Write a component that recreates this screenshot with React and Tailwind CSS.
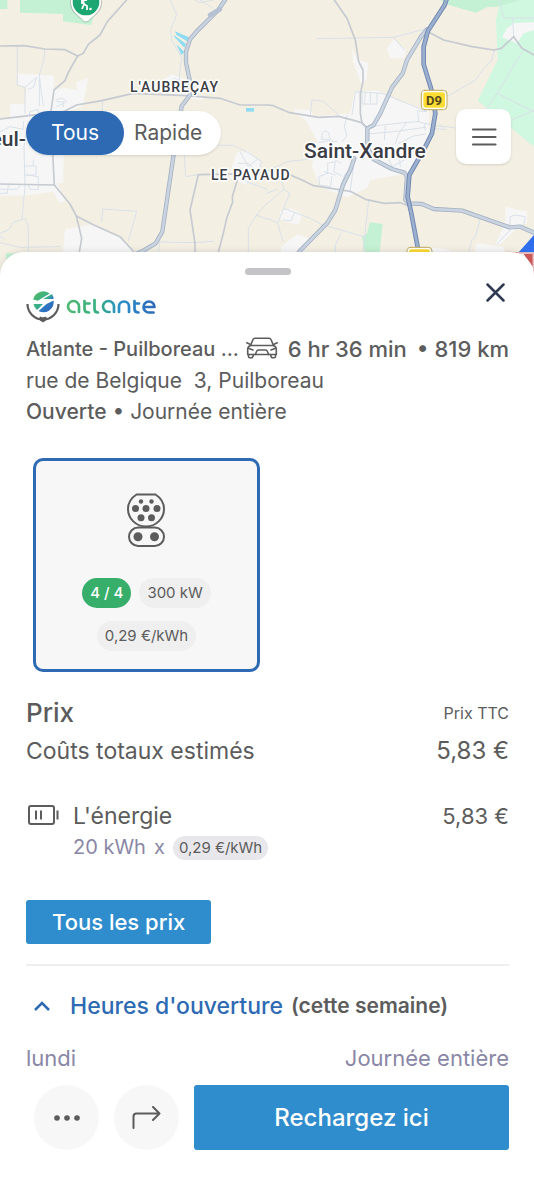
import React from "react";

const MAP_LABEL = {
  fontFamily: "Roboto, sans-serif",
  fontWeight: 500,
  fill: "#3a3d45",
  stroke: "#ffffff",
  strokeWidth: 3,
  strokeLinejoin: "round",
  paintOrder: "stroke",
};

function Road({ d }) {
  return (
    <>
      <path d={d} stroke="#a5b2c4" strokeWidth="13" />
      <path d={d} stroke="#c9d4e0" strokeWidth="8" />
    </>
  );
}

function MainRoad({ d }) {
  return (
    <>
      <path d={d} stroke="#7288b2" strokeWidth="14" />
      <path d={d} stroke="#9bb0cf" strokeWidth="8" />
    </>
  );
}

function MapView() {
  return (
    <svg
      className="col-start-1 row-start-1 block h-[280px] w-full"
      viewBox="0 0 534 280"
      preserveAspectRatio="xMidYMid slice"
      role="img"
      aria-label="Carte"
    >
      <rect width="534" height="280" fill="#f4efe3" />
      <g transform="scale(.33333)" fill="none" strokeLinejoin="round" strokeLinecap="round">
        <g fill="#c4f1d4">
          <path d="M0 0H22V27H0Z" />
          <path d="M60 0H298L272 75L189 64V42L60 38Z" />
          <path d="M18 760H50V800H18Z" />
        </g>
        <g fill="#f6f6f6">
          <path d="M52 220L162 227V268L200 264L232 270L228 246L265 235L248 320L192 336L190 510V548L172 550L196 604L178 608L160 575L70 587H0V360L30 355V312H75L80 262L52 256Z" />
          <path d="M195 688L280 672L360 710L405 757L400 840H180Z" />
          <path d="M480 246L515 222L548 235L560 285L500 280Z" />
          <path d="M560 285L620 288L605 300L575 296Z" />
          <path d="M695 500L712 455L745 452L785 490L772 525L740 555L690 535Z" />
        </g>
        <g fill="#8fdcf2">
          <path d="M525 94L567 112L561 124L530 105Z" />
          <path d="M521 105L558 131L553 143L524 112Z" />
          <path d="M529 132L553 156L544 165Z" />
          <path d="M738 324H762V335H738Z" />
        </g>
        <g stroke="#d9e1e9" strokeWidth="3">
          <path d="M52 140V255M135 148L132 180L118 225L122 262L130 318" />
          <path d="M52 255L75 262L110 232L100 262L85 268M75 262V340M118 235V318" />
          <path d="M168 300L185 294L200 305L170 320M170 305H190V320M90 335L115 328V345H90Z" />
          <path d="M0 395L30 380L70 388V365M85 365L72 440L75 560L66 655" />
          <path d="M75 498H108V525H75M82 525L115 530V568H90L85 555M100 480V498M0 568H50L62 555M0 580H22L25 555" />
          <path d="M0 700L25 690L40 668L75 655L85 680V757M0 728L60 742L180 740" />
          <path d="M0 710L12 716" />
          <path d="M305 665L308 627L410 634L385 722" />
          <path d="M307 302V340" />
          <path d="M510 0L530 44L512 88L515 120L545 172L538 225L540 262M505 250L525 235L545 245M515 262L530 240" />
          <path d="M600 0L640 25M585 0L600 8L640 0" />
          <path d="M553 466L557 530L595 524M655 436H700L745 458L785 485L775 515L742 550M720 455L745 500L770 480M715 490H745L765 512" />
          <path d="M801 610L770 645L745 685V757M475 757L480 726L585 728L640 724M770 645L801 658M740 545L801 568" />
        </g>
        <g stroke="#c6cad1" strokeWidth="5">
          <path d="M380 0L322 65L300 105L265 133L250 160L233 168L205 217L195 242L162 270L152 340L163 555" />
          <path d="M0 138L72 137L135 147L195 149L233 168" />
          <path d="M0 357L35 353L190 335L230 315L305 302L400 280L560 287L660 295L720 315H801" />
          <path d="M0 552L163 555L210 612L229 648L280 674L360 710L410 765" />
          <path d="M229 648L245 715L238 757" />
          <path d="M700 522L595 524L570 630L585 730V757M712 540L697 590L698 606L680 655L670 700L655 757" />
        </g>
        <Road d="M675 0L655 30L590 94L570 118L558 155V188L570 245V285L545 318L520 470L487 695L467 730L430 752L400 765" />
        <path d="M630 45L660 28" stroke="#b4c1d2" strokeWidth="14" />
      </g>

      <g transform="translate(267 0) scale(.33333)" fill="none" strokeLinejoin="round" strokeLinecap="round">
        <path d="M700 0H801V440L632 302L692 180L687 60Z" fill="#d0f7e0" />
        <path d="M520 0H760L690 20L660 22L627 38L545 15Z" fill="#c4f1d4" />
        <path d="M308 667L347 672L338 757L330 790H300L285 712L300 700Z" fill="#c4f1d4" />
        <g fill="#f6f6f6">
          <path d="M358 147L380 118L418 150L412 175H372Z" />
          <path d="M255 145L272 180L305 188L298 240L282 250L258 185Z" />
          <path d="M262 278L330 270L400 305L485 330L488 400L425 520L310 540L300 565L240 592L160 562L135 500L150 420L115 360L82 340V328L130 330L140 350L250 340Z" />
          <path d="M740 70L801 66V90L770 100L750 130L705 112L720 85Z" />
          <path d="M715 620L780 635V670L740 682L715 668Z" />
          <path d="M38 635L70 625L105 642L95 675L40 660Z" />
          <path d="M42 740L92 703L140 720L100 765H42ZM630 730L710 740V765H620ZM495 742L550 750V765H495ZM715 668L745 690L700 732H685Z" />
        </g>
        <g stroke="#d9e1e9" strokeWidth="3">
          <path d="M150 116L380 112L478 86M380 112L412 150M697 0L710 54H801M737 54L740 110M540 290L625 240L655 200L675 180L682 150" />
          <path d="M660 325L690 280L801 335M690 280L768 152M735 360L801 330" />
          <path d="M240 345L232 380L240 408L225 425M255 345L265 275L345 280L400 302L480 335L452 332L455 365L472 370L475 390M285 275V312H330V280M310 278V308M295 278L292 310" />
          <path d="M130 345L135 300L170 304L215 345M165 418V400L175 392L185 398L190 418H165M155 428L185 422L210 425" />
          <path d="M322 378L410 368L455 365M300 402L380 395L475 382M355 378L352 420M418 368L395 402L385 430M475 370L520 380H540L565 384M490 386L535 388M515 372L530 382M395 430L440 408L475 402M410 440L440 455M395 450L400 500M355 450L375 500L440 465" />
          <path d="M205 480L222 490M182 520V490L205 485L200 515L225 528M182 520L155 530L158 555L190 560L195 530M172 515L205 525M215 575L235 520M250 570L262 480" />
          <path d="M0 515L60 485L120 478M0 612L50 568L68 580L50 625L32 670L48 725M0 580L30 568M45 545L50 568M0 655L30 668M50 625L130 655L160 672L290 710M305 600L288 757M222 700L205 735V757" />
          <path d="M48 660L72 662L82 640M640 655L625 712L615 718L605 757M728 675L730 650L745 645L775 650L770 675M690 732L730 690" />
        </g>
        <g stroke="#c6cad1" strokeWidth="5">
          <path d="M202 0L240 55L265 120L275 185L288 210V245L280 280V340L285 370L300 384" />
          <path d="M0 315L15 316L68 338L155 352L215 349L285 368L300 384" />
          <path d="M483 95L530 120L615 140L680 150L703 145L740 110L765 145L801 165" />
          <path d="M70 525L105 540L140 557L250 574L295 598L352 610L400 608L425 618" />
        </g>
        <Road d="M480 88L462 110L420 180L407 220L375 262L340 340L320 375L301 385V440L320 478L375 507L412 518L420 530L415 600L425 610L465 612L500 627L585 632L728 682L760 680L801 698" />
        <Road d="M262 475L250 510L228 555L205 630L180 670L95 757" />
        <MainRoad d="M538 0L533 15L483 92L470 140V193L495 275L505 340L495 400L470 450L427 525L422 590L432 635L455 757" />
        <path d="M801 705V757H755Z" fill="#2f6fed" />
        <path d="M718 757L801 760V840" fill="#ffffff" stroke="#e9a9a9" strokeWidth="4" />
        <path d="M770 762H797V800Z" fill="#cf5a5a" />
        <g stroke="#bda95c" strokeWidth="3">
          <rect x="463" y="271" width="77" height="58" rx="11" fill="#fff" />
          <rect x="420" y="742" width="75" height="58" rx="11" fill="#fff" />
        </g>
        <rect x="469" y="277" width="65" height="46" rx="7" fill="#fddc33" />
        <rect x="426" y="748" width="63" height="46" rx="7" fill="#fddc33" />
      </g>

      <g style={MAP_LABEL}>
        <text x="130" y="92" fontSize="14" letterSpacing="1">L'AUBREÇAY</text>
        <text x="211" y="180" fontSize="14" letterSpacing="1">LE PAYAUD</text>
        <text x="304" y="158" fontSize="21">Saint-Xandre</text>
        <text x="26" y="146" fontSize="21" textAnchor="end">eul-</text>
      </g>
      <text x="434" y="105" fontSize="13" fontWeight="700" fill="#554a1d" textAnchor="middle" fontFamily="Roboto, sans-serif">D9</text>

      <g>
        <path d="M70 3C70-6 77-12 86-12S102-6 102 3C102 12 94 16 90 20Q86 25 82 20C78 16 70 12 70 3Z" fill="#8b8f93" opacity=".5" />
        <path d="M71 2C71-6 78-12 86-12S101-6 101 2C101 11 94 15 90 19Q86 24 82 19C78 15 71 11 71 2Z" fill="#fff" />
        <circle cx="86" cy="2" r="13.300" fill="#1ba672" />
        <path d="M82 0V4M82 9L84 4L83 0H87M84 4L87 6V10" fill="none" stroke="#fff" strokeWidth="1.800" />
        <circle cx="90.500" cy="9" r="1.300" fill="#fff" />
      </g>
    </svg>
  );
}

function AtlanteLogo() {
  return (
    <svg width="130" height="32" viewBox="0 0 130 32" role="img" aria-label="atlante">
      <defs>
        <linearGradient id="word" x1="40" x2="130" y1="0" y2="0" gradientUnits="userSpaceOnUse">
          <stop offset="0" stopColor="#52b971" />
          <stop offset=".35" stopColor="#35af80" />
          <stop offset=".6" stopColor="#2a8fc9" />
          <stop offset="1" stopColor="#2d69b8" />
        </linearGradient>
        <linearGradient id="globe" x1="9" x2="25" y1="3" y2="20" gradientUnits="userSpaceOnUse">
          <stop offset="0" stopColor="#52b96b" />
          <stop offset=".5" stopColor="#36ad8b" />
          <stop offset=".65" stopColor="#2d78c4" />
          <stop offset="1" stopColor="#2d69b8" />
        </linearGradient>
      </defs>
      <g fill="url(#globe)">
        <path d="M7.200 8.500A10.300 10.300 0 0 1 23.700 2.500L11.800 9.800Z" />
        <path d="M17 8L26 3Q27.500 5.500 27.500 8Z" />
        <path d="M7.500 13H17L11 19Q8 16.500 7.500 13Z" />
        <path d="M12.500 20L20.500 13L27.600 9.500A10.300 10.300 0 0 1 12.500 20Z" />
      </g>
      <path d="M1.500 13A15.500 15.500 0 0 0 32.500 13" fill="none" stroke="#5c5c5c" strokeWidth="2.200" />
      <path d="M14 26L17 27L20 26V29L17 31L14 29Z" fill="#5c5c5c" stroke="#5c5c5c" />
      <g transform="translate(0 1)" fill="none" stroke="url(#word)" strokeWidth="2.700" strokeLinecap="round" strokeLinejoin="round">
        <path d="M53 20V14.500A5.500 5.500 0 1 0 47.500 20H48.500" />
        <path d="M58.500 9V17Q58.500 20.500 63 20.500M58.500 11.500H63.500" />
        <path d="M68.500 8V17Q68.500 20.500 72 20.500" />
        <path d="M88 20V14.500A5.500 5.500 0 1 0 82.500 20H83.500" />
        <path d="M93 20V14.500A5 5 0 0 1 103 14.500V20" />
        <path d="M108.500 9V17Q108.500 20.500 112.500 20.500M108.500 11.500H113" />
        <path d="M119 15H128.500A5.500 5.500 0 1 0 123 20.500H127.500" />
      </g>
    </svg>
  );
}

function CarIcon() {
  return (
    <svg className="-mt-1 shrink-0" width="32" height="22" viewBox="0 0 32 22" fill="none" stroke="#5c5c5c" strokeWidth="1.600" strokeLinejoin="round" strokeLinecap="round" aria-hidden="true">
      <path d="M4.500 8.500L7 2.500Q7.500 1.200 9 1.200H23Q24.500 1.200 25 2.500L27.500 8.500" />
      <path d="M4.500 8.500H27.500Q30.300 9.500 30.300 12.500V17.500H1.700V12.500Q1.700 9.500 4.500 8.500ZM.8 5.800L4.500 7.500M31.200 5.800L27.500 7.500" />
      <path d="M2.500 17.500V19.500Q2.500 20.800 3.800 20.800H5.500Q6.800 20.800 7.500 17.500M29.500 17.500V19.500Q29.500 20.800 28.200 20.800H26.500Q25.200 20.800 24.500 17.500" />
      <path d="M9.500 17.500Q10.500 13 12.500 13H19.500Q21.500 13 22.500 17.500M3 11.500L7 13M29 11.500L25 13" />
    </svg>
  );
}

function PlugIcon() {
  return (
    <svg className="-ml-0.5" width="38" height="54" viewBox="0 0 38 54" fill="none" stroke="#5c5c5c" strokeWidth="2" aria-hidden="true">
      <path d="M9.500 1.500H28.500C34 5 37 10 37 16A18 17.500 0 0 1 1 16C1 10 4 5 9.500 1.500Z" />
      <rect x="2" y="34.500" width="35" height="18.500" rx="9.250" />
      <g fill="#5c5c5c" stroke="none">
        <circle cx="14" cy="8.500" r="2.200" />
        <circle cx="24.500" cy="8.500" r="2.200" />
        <circle cx="8.500" cy="15.500" r="3.500" />
        <circle cx="19" cy="15.500" r="3.500" />
        <circle cx="30" cy="15.500" r="3.500" />
        <circle cx="14" cy="24.800" r="3.500" />
        <circle cx="24.500" cy="24.800" r="3.500" />
        <circle cx="11" cy="43.800" r="4.500" />
        <circle cx="27.500" cy="43.800" r="4.500" />
      </g>
    </svg>
  );
}

function BatteryIcon() {
  return (
    <svg width="32" height="20" viewBox="0 0 32 20" fill="none" stroke="#5c5c5c" strokeWidth="2" aria-hidden="true">
      <rect x="1" y="1" width="25" height="18" rx="2" />
      <path d="M8 5.500V14.500M13 5.500V14.500M29.500 5.500V14.500" />
    </svg>
  );
}

export default function App() {
  return (
    <main className="min-h-screen bg-white font-['Inter',sans-serif] text-[#5c5c5c]">
      <div className="grid grid-cols-1">
        <MapView />
        <div className="z-10 col-start-1 row-start-1 flex items-start justify-between pt-[109px] pr-[23px] pl-[26px]">
          <div className="mt-0.5 flex h-[44px] rounded-full bg-white text-[21px] shadow-sm">
            <button className="rounded-full bg-[#2d6ab3] px-[25px] text-white">Tous</button>
            <button className="pr-[19px] pl-[10px]">Rapide</button>
          </div>
          <button aria-label="Menu" className="flex size-[55px] items-center justify-center rounded-[10px] bg-white shadow-sm">
            <svg width="26" height="18" viewBox="0 0 26 18" stroke="#5c5c5c" strokeWidth="2.200" strokeLinecap="round" aria-hidden="true">
              <path d="M2 1.500H24.500M2 9H24.500M2 16.500H24.500" />
            </svg>
          </button>
        </div>
      </div>

      <section className="relative z-20 -mt-7 rounded-t-[24px] bg-white pt-4 pr-[25px] pb-[50px] pl-[26px] shadow-[0_-1px_6px_rgba(0,0,0,0.10)]">
        <div className="mx-auto h-[7px] w-[46px] rounded-full bg-[#c4c4c6]" />

        <header className="flex items-start justify-between pt-4">
          <AtlanteLogo />
          <button aria-label="Fermer" className="-mt-3 mr-1 py-1">
            <svg width="19" height="19" viewBox="0 0 19 19" stroke="#303a52" strokeWidth="2.500" strokeLinecap="round" aria-hidden="true">
              <path d="M1.500 1.500L17.500 17.500M17.500 1.500L1.500 17.500" />
            </svg>
          </button>
        </header>

        <div className="mt-[11px] text-[21px] leading-[31px]">
          <div className="flex items-center justify-between font-medium">
            <h1 className="min-w-0 truncate text-[20px]">Atlante - Puilboreau ...</h1>
            <p className="flex shrink-0 items-center gap-2.5 text-[22px]">
              <CarIcon />
              <span>6 hr 36 min</span>
              <span>• 819 km</span>
            </p>
          </div>
          <p className="whitespace-pre-wrap">rue de Belgique  3, Puilboreau</p>
          <p><span className="font-medium">Ouverte</span> • Journée entière</p>
        </div>

        <button className="mt-[31px] ml-[7px] flex h-[214px] w-[227px] flex-col items-center rounded-[10px] border-[3px] border-[#2d6ab3] bg-[#f7f7f7] pt-[32px] text-[15px]">
          <PlugIcon />
          <span className="mt-[31px] flex gap-2 leading-[30px]">
            <span className="rounded-full bg-[#38ae6b] px-2 font-medium text-white">4 / 4</span>
            <span className="rounded-full bg-[#efefef] px-2">300 kW</span>
          </span>
          <span className="mt-[13px] rounded-full bg-[#efefef] px-2 leading-[30px]">0,29 €/kWh</span>
        </button>

        <div className="mt-[22px] flex items-center justify-between leading-[38px]">
          <h2 className="text-[26px] font-medium">Prix</h2>
          <span className="text-[16px]">Prix TTC</span>
        </div>
        <div className="flex items-center justify-between text-[23px] leading-[38px]">
          <span>Coûts totaux estimés</span>
          <span className="text-[24px]">5,83 €</span>
        </div>

        <div className="mt-[31px] flex items-start leading-[31px]">
          <div className="flex h-[28px] w-[47px] items-center pl-0.5">
            <BatteryIcon />
          </div>
          <div className="flex-1">
            <p className="text-[23px]">L'énergie</p>
            <p className="flex items-center gap-2 text-[20px] text-[#8a87a6]">
              <span>20 kWh</span>
              <span>x</span>
              <span className="rounded-full bg-[#e8e8ec] px-1.5 text-[15px] leading-6 text-[#5c5c5c]">0,29 €/kWh</span>
            </p>
          </div>
          <span className="text-[22px]">5,83 €</span>
        </div>

        <button className="mt-[37px] block h-[44px] rounded-[3px] bg-[#2f8ccd] px-[26px] text-[22px] font-medium text-white">Tous les prix</button>

        <hr className="mt-5 border-t-2 border-[#efefef]" />

        <button className="mt-6 flex h-8 items-center">
          <svg className="mr-5 ml-2" width="16" height="10" viewBox="0 0 16 10" fill="none" stroke="#2d6ab3" strokeWidth="2.500" aria-hidden="true">
            <path d="M1 9L8 2L15 9" />
          </svg>
          <span className="text-[23px] font-medium text-[#2d6ab3]">Heures d'ouverture</span>
          <span className="ml-2 text-[21px] font-semibold">(cette semaine)</span>
        </button>

        <div className="mt-5 flex justify-between text-[22px] leading-8 text-[#8a87a6]">
          <span>lundi</span>
          <span>Journée entière</span>
        </div>

        <div className="mt-[11px] flex gap-[15px] pl-2">
          <button aria-label="Plus d'options" className="flex size-[65px] items-center justify-center rounded-full bg-[#f7f7f7]">
            <svg width="26" height="6" viewBox="0 0 26 6" fill="#5c5c5c" aria-hidden="true">
              <circle cx="3" cy="3" r="2.800" /><circle cx="13" cy="3" r="2.800" /><circle cx="23" cy="3" r="2.800" />
            </svg>
          </button>
          <button aria-label="Itinéraire" className="flex size-[65px] items-center justify-center rounded-full bg-[#f7f7f7]">
            <svg width="29" height="23" viewBox="0 0 29 23" fill="none" stroke="#5c5c5c" strokeWidth="2" strokeLinecap="round" strokeLinejoin="round" aria-hidden="true">
              <path d="M1.500 22V10.500Q1.500 7.500 4.500 7.500H27.500M21 1L27.500 7.500L21 14" />
            </svg>
          </button>
          <button className="h-[65px] flex-1 rounded-[3px] bg-[#2f8ccd] text-[24px] font-medium text-white">Rechargez ici</button>
        </div>
      </section>
    </main>
  );
}
